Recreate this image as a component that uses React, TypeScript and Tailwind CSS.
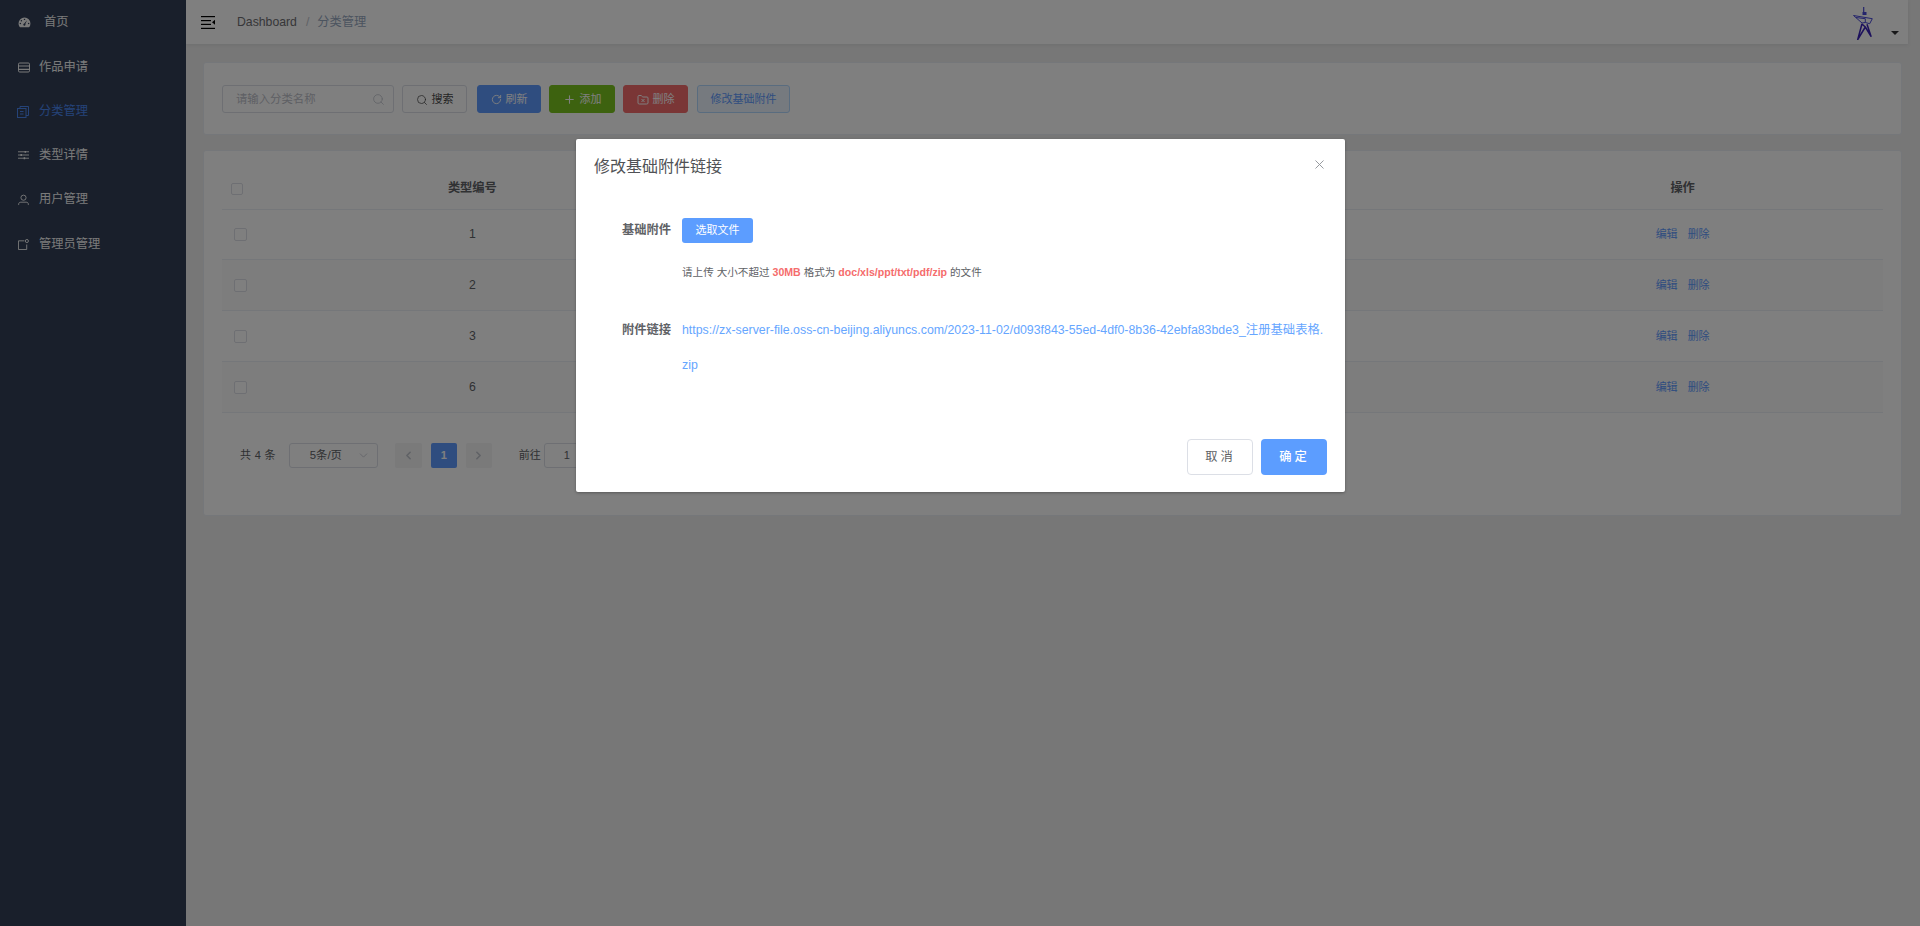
import { ChevronDown, ChevronLeft, ChevronRight, FolderX, Plus, RotateCw, Search, X } from "lucide-react";
import type { ReactNode } from "react";

const FONT = "[font-family:'Liberation_Sans','Noto_Sans_CJK_SC',sans-serif]";

function GaugeIcon() {
  return (
    <svg viewBox="0 0 14 12" className="h-[11px] w-[13px]" fill="currentColor">
      <path d="M7 0.5A6.5 6.5 0 0 0 0.5 7c0 1.6.6 3.1 1.6 4.3h9.8A6.5 6.5 0 0 0 13.5 7 6.5 6.5 0 0 0 7 .5z" />
      <g fill="#323f57">
        <circle cx="7" cy="2.6" r=".8" />
        <circle cx="3.6" cy="4" r=".8" />
        <circle cx="2.5" cy="7.2" r=".8" />
        <circle cx="11.5" cy="7.2" r=".8" />
        <path d="M9.8 3.6 7.9 7.6a1.2 1.2 0 1 1-1.2-.5z" />
      </g>
    </svg>
  );
}

function CardIcon() {
  return (
    <svg viewBox="0 0 12 11" className="h-[11px] w-[12px]" fill="none" stroke="currentColor" strokeWidth="1">
      <rect x=".5" y="1" width="11" height="9" rx="1.2" />
      <path d="M.5 4h11M.5 7.4h11" strokeWidth="1.2" />
    </svg>
  );
}

function CopyIcon() {
  return (
    <svg viewBox="0 0 12 12" className="h-[12px] w-[12px]" fill="none" stroke="currentColor" strokeWidth="1">
      <rect x=".5" y="2.5" width="8.5" height="9" />
      <path d="M3 2.5V.5h8.5v9H9M3 5.5h3.5M3 8h3.5" />
    </svg>
  );
}

function SlidersIcon() {
  return (
    <svg viewBox="0 0 12 10" className="h-[10px] w-[11px]" fill="none" stroke="currentColor" strokeWidth="1">
      <path d="M0 1.5h12M0 5h12M0 8.5h12" />
      <path d="M8 .5v2M3.5 4v2M7 7.500v2" strokeWidth="1.6" />
    </svg>
  );
}

function UserIcon() {
  return (
    <svg viewBox="0 0 12 12" className="h-[12px] w-[11px]" fill="none" stroke="currentColor" strokeWidth="1">
      <circle cx="6" cy="3.500" r="2.800" />
      <path d="M.7 11.500V10.600c0-1.400 1-2.200 2.400-2.200h5.800c1.400 0 2.400.8 2.400 2.200v.9" />
    </svg>
  );
}

function AdminIcon() {
  return (
    <svg viewBox="0 0 12 12" className="h-[11px] w-[11px]" fill="none" stroke="currentColor" strokeWidth="1">
      <path d="M7 2H.5v9.500h9V6" />
      <circle cx="9.700" cy="2.200" r="1.700" />
    </svg>
  );
}

function HamburgerIcon() {
  return (
    <svg viewBox="0 0 14 13" className="h-[13px] w-[14px]" fill="#000">
      <rect x="0" y="0" width="14" height="1.200" />
      <rect x="0" y="4" width="10" height="1.200" />
      <rect x="0" y="7.800" width="10" height="1.200" />
      <rect x="0" y="11.800" width="14" height="1.200" />
      <path d="M14 3.700v5l-3-2.500z" />
    </svg>
  );
}

// rough drawing of the avatar logo
function LogoIcon() {
  return (
    <svg viewBox="0 0 20 33" className="h-[33px] w-[20px]" fill="none" stroke="#4a4ad8" strokeWidth="1" strokeLinejoin="round">
      <path d="M10.700 0v5" strokeWidth="1.200" />
      <rect x="9.500" y="5" width="4" height="3" fill="#4a4ad8" stroke="none" />
      <path d="M.5 8.500 19.300 11.700 16.700 16.700 12.300 15.500 9 16z" />
      <path d="M12.300 11.700 12.300 15.500M3 10.500 12.300 11.700" />
      <path d="M9 16.700 4.700 32.700 12.300 20 18 29.300 14 17.300M9 17l3.300 3" strokeWidth="1.500" stroke="#3a22b8" />
    </svg>
  );
}

const menu = [
  { label: "首页", icon: <GaugeIcon />, iconX: "pl-[18px]", gap: "gap-[13px]", h: "h-[45px]" },
  { label: "作品申请", icon: <CardIcon />, iconX: "pl-[17px]", gap: "gap-[9px]", h: "h-[45px]" },
  { label: "分类管理", icon: <CopyIcon />, iconX: "pl-[16px]", gap: "gap-[10px]", h: "h-[43px]", active: true },
  { label: "类型详情", icon: <SlidersIcon />, iconX: "pl-[17px]", gap: "gap-[9px]", h: "h-[44px]" },
  { label: "用户管理", icon: <UserIcon />, iconX: "pl-[17px]", gap: "gap-[9px]", h: "h-[45px]" },
  { label: "管理员管理", icon: <AdminIcon />, iconX: "pl-[17px]", gap: "gap-[9px]", h: "h-[44px]" },
];

function ToolButton({ className, children }: { className: string; children: ReactNode }) {
  return (
    <button className={`flex h-[28px] items-center justify-center gap-[4px] rounded-[3px] border pt-[1px] text-[11px] ${className}`}>
      {children}
    </button>
  );
}

function Checkbox({ size }: { size: string }) {
  return <span className={`block rounded-[2px] border border-[#dcdfe6] bg-white ${size}`} />;
}

const rows = ["1", "2", "3", "6"];

export default function App() {
  return (
    <div className={`relative flex h-[926px] w-full overflow-hidden bg-[#eeeeee] ${FONT}`}>
      <aside className="w-[186px] shrink-0 bg-[#323f57] text-[12.25px] text-[#f5f5f5]">
        {menu.map((m) => (
          <div
            key={m.label}
            className={`flex items-center ${m.h} ${m.iconX} ${m.gap} ${m.active ? "text-[#4a86f0]" : ""}`}
          >
            <span className="flex w-[13px] justify-center">{m.icon}</span>
            <span>{m.label}</span>
          </div>
        ))}
      </aside>

      <main className="flex min-w-0 flex-1 flex-col">
        <header className="mr-[12px] flex h-[44px] items-center bg-white pl-[15px] shadow-[0_1px_4px_rgba(0,21,41,0.08)]">
          <HamburgerIcon />
          <div className="ml-[22px] flex items-center text-[12.25px] text-[#6e6e72]">
            <span>Dashboard</span>
            <span className="ml-[9px] mr-[8px] text-[#c0c4cc]">/</span>
            <span className="text-[#97a8be]">分类管理</span>
          </div>
          <div className="relative ml-auto mr-[35px] flex items-center pt-[2px]">
            <LogoIcon />
            <span className="absolute -right-[26px] bottom-[5px] h-0 w-0 border-x-[4px] border-t-[4px] border-x-transparent border-t-[#303133]" />
          </div>
        </header>

        <div className="flex flex-col pl-[17px] pr-[18px]">
          <section className="mt-[18px] flex h-[73px] items-start gap-[8px] rounded-[3px] border border-[#ebeef5] bg-white pl-[18px] pt-[22px]">
            <div className="flex h-[28px] w-[172px] items-center justify-between rounded-[3px] border border-[#dcdfe6] pl-[13px] pr-[8px] pt-[1px] text-[11.375px] text-[#bcc0c8]">
              <span>请输入分类名称</span>
              <Search size={13} strokeWidth={1.500} className="text-[#c0c4cc]" />
            </div>
            <ToolButton className="w-[65px] border-[#dcdfe6] bg-white text-[#4a4a4a]">
              <Search size={12} strokeWidth={1.500} />
              搜索
            </ToolButton>
            <ToolButton className="ml-[2px] w-[64px] border-[#5f9bff] bg-[#5f9bff] text-white">
              <RotateCw size={11} />
              刷新
            </ToolButton>
            <ToolButton className="w-[66px] border-[#7bc41f] bg-[#7bc41f] text-white">
              <Plus size={13} />
              添加
            </ToolButton>
            <ToolButton className="w-[65px] border-[#f56c6c] bg-[#f56c6c] text-white">
              <FolderX size={12} />
              删除
            </ToolButton>
            <ToolButton className="ml-[1px] w-[93px] border-[#b3d8ff] bg-[#ecf5ff] text-[#5f9bff]">修改基础附件</ToolButton>
          </section>

          <section className="mt-[15px] h-[366px] rounded-[3px] border border-[#ebeef5] bg-white px-[18px] pt-[17px] text-[12.25px] text-[#606266]">
            <div className="grid h-[42px] grid-cols-[50px_repeat(4,1fr)] items-center border-b border-[#ebeef5] font-bold text-[#606266]">
              <span className="pl-[9px]">
                <Checkbox size="h-[12px] w-[12px]" />
              </span>
              <span className="pr-[2px] text-center">类型编号</span>
              <span />
              <span />
              <span className="pl-[2px] text-center">操作</span>
            </div>
            {rows.map((r, i) => (
              <div
                key={r}
                className={`grid grid-cols-[50px_repeat(4,1fr)] items-center border-b border-[#ebeef5] ${i === 0 ? "h-[50px]" : "h-[51px]"} ${i % 2 === 1 ? "bg-[#fafafa]" : ""}`}
              >
                <span className="pl-[12px]">
                  <Checkbox size="h-[13px] w-[13px]" />
                </span>
                <span className="pr-[2px] text-center">{r}</span>
                <span />
                <span />
                <span className="flex justify-center gap-[10px] pl-[2px] text-[11px] text-[#5f9bff]">
                  <span>编辑</span>
                  <span>删除</span>
                </span>
              </div>
            ))}
            <div className="mt-[30px] flex h-[25px] items-center pl-[18px] text-[11px] text-[#606266]">
              <span className="tracking-[0.3px]">共 4 条</span>
              <div className="ml-[13px] flex h-[25px] w-[89px] items-center justify-between rounded-[3px] border border-[#dcdfe6] pl-[20px] pr-[7px] text-[11.375px]">
                <span>5条/页</span>
                <ChevronDown size={13} strokeWidth={1.500} className="text-[#c0c4cc]" />
              </div>
              <span className="ml-[17px] flex h-[25px] w-[27px] items-center justify-center rounded-[2px] bg-[#f4f4f5] text-[#c0c4cc]">
                <ChevronLeft size={13} strokeWidth={3} />
              </span>
              <span className="ml-[9px] flex h-[25px] w-[26px] items-center justify-center rounded-[2px] bg-[#5f9bff] font-bold text-white">
                1
              </span>
              <span className="ml-[9px] flex h-[25px] w-[26px] items-center justify-center rounded-[2px] bg-[#f4f4f5] text-[#c0c4cc]">
                <ChevronRight size={13} strokeWidth={3} />
              </span>
              <span className="ml-[27px]">前往</span>
              <span className="ml-[3px] flex h-[25px] w-[46px] items-center justify-center rounded-[3px] border border-[#dcdfe6]">1</span>
            </div>
          </section>
        </div>
      </main>

      {/* dim layer and dialog */}
      <div className="absolute inset-0 z-10 bg-black/50" />
      <div className="absolute left-[576px] top-[139px] z-20 flex h-[353px] w-[769px] flex-col rounded-[2px] bg-white shadow-[0_1px_3px_rgba(0,0,0,0.3)]">
        <div className="flex items-start justify-between pl-[18px] pr-[18px]">
          <h2 className="mt-[17px] text-[16px] leading-[22px] text-[#505256]">修改基础附件链接</h2>
          <X size={15} strokeWidth={1.500} className="mt-[18px] text-[#909399]" />
        </div>
        <div className="mt-[40px] flex items-start pl-[46px]">
          <span className="w-[60px] pt-[4px] text-[12.25px] font-bold leading-[16px] text-[#606266]">基础附件</span>
          <button className="flex h-[25px] w-[71px] items-center justify-center rounded-[3px] bg-[#5c9dff] text-[11px] text-white">
            选取文件
          </button>
        </div>
        <p className="ml-[106px] mt-[22px] text-[10.58px] leading-[14px] text-[#606266]">
          请上传 大小不超过 <b className="text-[#f56c6c]">30MB</b> 格式为 <b className="text-[#f56c6c]">doc/xls/ppt/txt/pdf/zip</b> 的文件
        </p>
        <div className="mt-[34px] flex items-start pl-[46px]">
          <span className="w-[60px] text-[12.25px] font-bold leading-[35px] text-[#606266]">附件链接</span>
          <a className="text-[12.35px] leading-[35px] text-[#66a6ff]">
            https://zx-server-file.oss-cn-beijing.aliyuncs.com/2023-11-02/d093f843-55ed-4df0-8b36-42ebfa83bde3_注册基础表格.
            <br />
            zip
          </a>
        </div>
        <div className="mt-auto flex justify-end gap-[8px] pb-[17px] pr-[18px]">
          <button className="h-[36px] w-[66px] rounded-[4px] border border-[#dcdfe6] bg-white pl-[1px] text-[12.25px] tracking-[3px] text-[#606266]">
            取消
          </button>
          <button className="h-[36px] w-[66px] rounded-[4px] bg-[#5c9dff] pl-[1px] text-[12.25px] font-medium tracking-[3px] text-white">
            确定
          </button>
        </div>
      </div>
    </div>
  );
}
